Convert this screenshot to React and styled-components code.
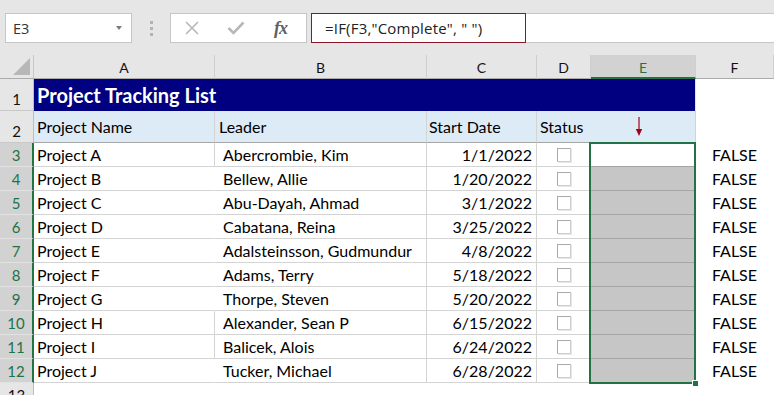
import styled, { createGlobalStyle } from "styled-components";

const GlobalStyle = createGlobalStyle`
  html, body {
    margin: 0;
    padding: 0;
    background: #ffffff;
    overflow: hidden;
  }
  body {
    width: 774px;
    height: 395px;
    font-family: Lato, "Liberation Sans", sans-serif;
  }
`;

const Page = styled.div`
  width: 774px;
  height: 395px;
  overflow: hidden;
  background: #ffffff;
`;

/* ---------- formula bar ---------- */

const FormulaBar = styled.div`
  height: 55px;
  box-sizing: border-box;
  background: #e6e6e6;
  display: flex;
  align-items: flex-start;
  padding: 13px 0 0 5px;
`;

const NameBox = styled.div`
  width: 127px;
  height: 30px;
  box-sizing: border-box;
  background: #ffffff;
  border: 1px solid #c6c6c6;
  display: flex;
  align-items: center;
  justify-content: space-between;
  padding: 0 9px 0 7px;
  font-family: "Open Sans", Lato, sans-serif;
  font-size: 14.5px;
  color: #333;
`;

const DropArrow = styled.span`
  width: 0;
  height: 0;
  border-left: 3.5px solid transparent;
  border-right: 3.5px solid transparent;
  border-top: 4px solid #7a7a7a;
`;

const Grip = styled.div`
  width: 38px;
  height: 30px;
  display: flex;
  flex-direction: column;
  align-items: center;
  justify-content: center;
  gap: 3px;

  span {
    width: 3px;
    height: 3px;
    background: #b3b3b3;
  }
`;

const ButtonBox = styled.div`
  width: 137px;
  height: 30px;
  box-sizing: border-box;
  background: #ffffff;
  border: 1px solid #c6c6c6;
  display: flex;
  align-items: center;
  padding-left: 13px;
  gap: 27px;
`;

const FxLabel = styled.span`
  font-family: "Liberation Serif", "DejaVu Serif", serif;
  font-style: italic;
  font-weight: bold;
  font-size: 18px;
  color: #606060;
  letter-spacing: -1px;
  margin-left: 2px;
`;

const FormulaField = styled.div`
  flex: 1;
  height: 30px;
  margin-left: 4px;
  box-sizing: border-box;
  background: #ffffff;
  border-top: 1px solid #c6c6c6;
  border-bottom: 1px solid #c6c6c6;
  display: flex;
`;

const FormulaText = styled.div`
  width: 215px;
  height: 30px;
  margin-top: -1px;
  box-sizing: border-box;
  border: 1.5px solid #8a1629;
  display: flex;
  align-items: center;
  padding-left: 13px;
  font-family: "Open Sans", Lato, sans-serif;
  font-size: 15px;
  letter-spacing: 0.2px;
  color: #222;
  white-space: pre;
`;

/* ---------- sheet grid ---------- */

const Sheet = styled.div`
  position: relative;
  display: grid;
  grid-template-columns: 34px 181px 212px 110px 54px 105px 1fr;
  grid-template-rows: 24px 32px 32px repeat(10, 24px) 24px;
  font-size: 16px;
  color: #000;
`;

const Corner = styled.div`
  background: #e6e6e6;
  border-right: 1px solid #c6c6c6;
  border-bottom: 1px solid #ababab;
  display: flex;
  align-items: flex-end;
  justify-content: flex-end;
  padding: 0 3px 3px 0;

  &::after {
    content: "";
    width: 0;
    height: 0;
    border-left: 17px solid transparent;
    border-bottom: 17px solid #b7b7b7;
  }
`;

const ColHead = styled.div`
  background: ${(p) => (p.$sel ? "#d2d2d2" : "#e6e6e6")};
  color: ${(p) => (p.$sel ? "#217346" : "#111")};
  border-right: 1px solid #cfcfcf;
  border-bottom: ${(p) => (p.$sel ? "2px solid #217346" : "1px solid #ababab")};
  display: flex;
  align-items: center;
  justify-content: center;
  font-size: 14px;
  padding-top: ${(p) => (p.$sel ? "3px" : "2px")};
`;

const RowHead = styled.div`
  background: ${(p) => (p.$sel ? "#d2d2d2" : "#e6e6e6")};
  color: ${(p) => (p.$sel ? "#217346" : "#111")};
  border-right: ${(p) => (p.$sel ? "2px solid #217346" : "1px solid #bdbdbd")};
  border-bottom: 1px solid ${(p) => (p.$sel ? "#e2e2e2" : "#c8c8c8")};
  display: flex;
  align-items: flex-end;
  justify-content: center;
  padding-bottom: 2px;
  font-size: 15px;
`;

const Title = styled.div`
  grid-column: 2 / 7;
  background: #000080;
  color: #ffffff;
  font-weight: bold;
  font-size: 20px;
  display: flex;
  align-items: center;
  padding-left: 3px;
  border-right: 1px solid #e4e4e4;
`;

const Cell = styled.div`
  display: flex;
  align-items: center;
  justify-content: ${(p) =>
    p.$align === "right" ? "flex-end" : p.$align === "center" ? "center" : "flex-start"};
  padding: 0 ${(p) => p.$pr ?? 3}px 0 ${(p) => p.$pl ?? 3}px;
  background: ${(p) => p.$bg || "transparent"};
  border-right: 1px solid ${(p) => (p.$vline ? "#d4d4d4" : "transparent")};
  border-bottom: 1px solid ${(p) => p.$hline || "transparent"};
  white-space: nowrap;
  min-width: 0;
`;

const CheckBox = styled.span`
  width: 14px;
  height: 14px;
  box-sizing: border-box;
  border: 1px solid;
  border-color: #a9a9a9 #cfcfcf #cfcfcf #a9a9a9;
  box-shadow: 1px 1px 0 #e6e6e6;
  background: #ffffff;
`;

/* the green range outline lies over the E3:E12 cells */
const Selection = styled.div`
  position: absolute;
  grid-column: 6 / 7;
  grid-row: 4 / 14;
  top: -1px;
  bottom: -1px;
  left: -2px;
  right: 0;
  border: 2px solid #217346;
  pointer-events: none;

  &::after {
    content: "";
    position: absolute;
    right: -4px;
    bottom: -4px;
    width: 5px;
    height: 5px;
    background: #217346;
    border: 1px solid #ffffff;
    border-right: none;
    border-bottom: none;
  }
`;

const HEADER_BLUE = "#ddebf7";
const GRID = "#d4d4d4";

const projects = [
  ["Project A", "Abercrombie, Kim", "1/1/2022"],
  ["Project B", "Bellew, Allie", "1/20/2022"],
  ["Project C", "Abu-Dayah, Ahmad", "3/1/2022"],
  ["Project D", "Cabatana, Reina", "3/25/2022"],
  ["Project E", "Adalsteinsson, Gudmundur", "4/8/2022"],
  ["Project F", "Adams, Terry", "5/18/2022"],
  ["Project G", "Thorpe, Steven", "5/20/2022"],
  ["Project H", "Alexander, Sean P", "6/15/2022"],
  ["Project I", "Balicek, Alois", "6/24/2022"],
  ["Project J", "Tucker, Michael", "6/28/2022"],
];

// rows where the A|B border is drawn
const abLine = [0, 7, 8];

const columns = ["A", "B", "C", "D", "E", "F"];

const CancelIcon = () => (
  <svg width="16" height="14" viewBox="0 0 16 14">
    <path d="M2 1 L14 13 M14 1 L2 13" stroke="#b8b8b8" strokeWidth="1.6" fill="none" />
  </svg>
);

const EnterIcon = () => (
  <svg width="18" height="14" viewBox="0 0 18 14">
    <path d="M1.5 7 L6.5 12 L16.5 1.5" stroke="#b8b8b8" strokeWidth="2.6" fill="none" />
  </svg>
);

const DownArrow = () => (
  <svg width="8" height="20" viewBox="0 0 8 20">
    <path d="M4 0 L4 13" stroke="#a3001f" strokeWidth="1.2" />
    <path d="M0.8 12 L7.2 12 L4 19 Z" fill="#a3001f" />
  </svg>
);

export default function App() {
  return (
    <Page>
      <GlobalStyle />
      <FormulaBar>
        <NameBox>
          E3
          <DropArrow />
        </NameBox>
        <Grip>
          <span />
          <span />
          <span />
        </Grip>
        <ButtonBox>
          <CancelIcon />
          <EnterIcon />
          <FxLabel>fx</FxLabel>
        </ButtonBox>
        <FormulaField>
          <FormulaText>{'=IF(F3,"Complete", " ")'}</FormulaText>
        </FormulaField>
      </FormulaBar>

      <Sheet>
        <Corner />
        {columns.map((c) => (
          <ColHead key={c} $sel={c === "E"}>
            {c}
          </ColHead>
        ))}

        <RowHead>1</RowHead>
        <Title>Project Tracking List</Title>
        <Cell />

        <RowHead>2</RowHead>
        <Cell $bg={HEADER_BLUE} $vline $hline="#a6a6a6">Project Name</Cell>
        <Cell $bg={HEADER_BLUE} $vline $hline="#a6a6a6" $pl={4}>Leader</Cell>
        <Cell $bg={HEADER_BLUE} $vline $hline="#a6a6a6" $pl={2}>Start Date</Cell>
        <Cell $bg={HEADER_BLUE} $hline="#a6a6a6">Status</Cell>
        <Cell $bg={HEADER_BLUE} $vline $hline="#a6a6a6" $pl={44}>
          <DownArrow />
        </Cell>
        <Cell />

        {projects.map(([name, leader, date], i) => (
          <Row key={name} index={i} name={name} leader={leader} date={date} />
        ))}

        <RowHead>13</RowHead>
        <Cell />
        <Cell />
        <Cell />
        <Cell />
        <Cell />
        <Cell />

        <Selection />
      </Sheet>
    </Page>
  );
}

function Row({ index, name, leader, date }) {
  return (
    <>
      <RowHead $sel>{index + 3}</RowHead>
      <Cell $bg="#fff" $vline={abLine.includes(index)} $hline={GRID}>
        {name}
      </Cell>
      <Cell $bg="#fff" $vline $hline={GRID} $pl={8}>
        {leader}
      </Cell>
      <Cell $bg="#fff" $vline $hline={GRID} $align="right" $pr={4}>
        {date}
      </Cell>
      <Cell $bg="#fff" $vline $hline={GRID} $align="center" $pl={0} $pr={0}>
        <CheckBox />
      </Cell>
      <Cell $bg={index === 0 ? "#fff" : "#c6c6c6"} $vline $hline="#a6a6a6" />
      <Cell $align="center">FALSE</Cell>
    </>
  );
}
